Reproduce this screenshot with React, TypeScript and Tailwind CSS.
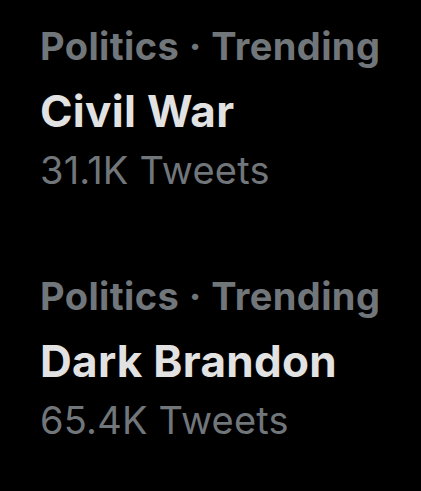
const trends = [
  { category: "Politics · Trending", name: "Civil War", count: "31.1K Tweets" },
  { category: "Politics · Trending", name: "Dark Brandon", count: "65.4K Tweets" },
];

export default function App() {
  return (
    <div className="w-[421px] h-[491px] bg-black overflow-hidden pt-[22px] pl-[40px] font-['Inter',sans-serif]">
      {trends.map((t) => (
        <div key={t.name} className="h-[250px] flex flex-col">
          <div className="text-[38px] leading-[48px] font-bold tracking-[0.4px] text-[#71767b]">{t.category}</div>
          <div className="mt-[16px] text-[44px] leading-[50px] font-bold tracking-[0.3px] text-[#e2e2e2]">{t.name}</div>
          <div className="mt-[10px] text-[38px] leading-[48px] tracking-[0.2px] text-[#71767b]">{t.count}</div>
        </div>
      ))}
    </div>
  );
}
